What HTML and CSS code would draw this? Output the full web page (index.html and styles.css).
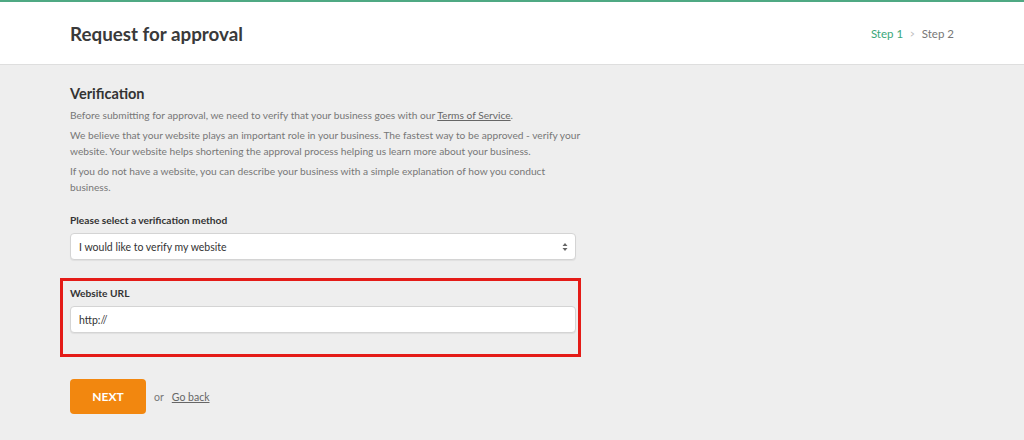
FILE: index.html
```html
<!doctype html>
<html lang="en">
<head>
  <meta charset="UTF-8">
  <meta name="viewport" content="width=device-width, initial-scale=1.0">
  <title>Request for approval</title>
  <link rel="stylesheet" href="styles.css">
</head>
<body>
  <header class="topbar">
    <h1>Request for approval</h1>
    <div class="steps">
      <span class="step active">Step 1</span>
      <span class="step-sep">&gt;</span>
      <span class="step">Step 2</span>
    </div>
  </header>

  <form class="content" method="POST" action="/approval">
    <h2>Verification</h2>
    <p>Before submitting for approval, we need to verify that your business goes with our <a href="#">Terms of Service</a>.</p>
    <p>We believe that your website plays an important role in your business. The fastest way to be approved - verify your website. Your website helps shortening the approval process helping us learn more about your business.</p>
    <p>If you do not have a website, you can describe your business with a simple explanation of how you conduct business.</p>

    <div class="form-group">
      <label for="method">Please select a verification method</label>
      <div class="select-wrapper">
        <select id="method" name="method">
          <option>I would like to verify my website</option>
          <option>I would like to describe my business</option>
        </select>
        <svg class="select-arrows" width="6" height="10" viewBox="0 0 6 10">
          <path d="M0.5 4 L3 1 L5.5 4 Z M0.5 6 L3 9 L5.5 6 Z" fill="#666"/>
        </svg>
      </div>
    </div>

    <div class="form-group highlight">
      <label for="url">Website URL</label>
      <input type="text" id="url" name="url" value="http://">
    </div>

    <div class="actions">
      <button type="submit" class="next-btn">NEXT</button>
      <span class="or">or</span>
      <a href="#" class="back-link">Go back</a>
    </div>
  </form>
</body>
</html>
```

FILE: styles.css
```css
body {
  font-family: Lato, 'Liberation Sans', Arial, sans-serif;
  margin: 0;
  padding: 0;
  background: #eeeeee;
  color: #333;
}

.topbar {
  background: #fff;
  border-top: 2px solid #4fa983;
  border-bottom: 1px solid #dedede;
  height: 62px;
  padding: 0 70px;
  display: flex;
  align-items: center;
  justify-content: space-between;
}

.topbar h1 {
  margin: 0;
  font-size: 18.8px;
  font-weight: bold;
  color: #3a3a3a;
}

.steps {
  font-size: 11.5px;
  color: #777;
  display: flex;
  gap: 6px;
}

.step.active {
  color: #3aa77a;
}

.step-sep {
  color: #bbb;
  transform: scaleX(0.7);
}

.content {
  padding: 20px 70px 0;
  width: 506px;
}

h2 {
  margin: 0 0 5px;
  font-size: 14.5px;
  color: #333;
}

p {
  margin: 0 -8px 4px 0;
  font-size: 10.2px;
  line-height: 16px;
  color: #777;
}

p a {
  color: #666;
}

.form-group {
  margin-top: 19px;
}

label {
  display: block;
  font-size: 10.2px;
  font-weight: bold;
  color: #333;
  margin-bottom: 7px;
}

.select-wrapper {
  position: relative;
}

select,
input[type="text"] {
  display: block;
  width: 100%;
  box-sizing: border-box;
  height: 27px;
  padding: 0 8px;
  background: #fff;
  border: 1px solid #d4d4d4;
  border-radius: 4px;
  box-shadow: 0 1px 1px rgba(0, 0, 0, 0.06);
  font-family: inherit;
  font-size: 10.5px;
  color: #333;
  appearance: none;
  -webkit-appearance: none;
}

.select-arrows {
  position: absolute;
  right: 8px;
  top: 9px;
}

.highlight {
  margin: 18px -5px 0 -10px;
  padding: 6px 2px 21px 7px;
  border: 3px solid #e41b17;
}

.actions {
  display: flex;
  align-items: center;
  margin-top: 22px;
}

.next-btn {
  width: 76px;
  height: 35px;
  background: #f2870f;
  color: #fff;
  border: none;
  border-radius: 4px;
  font-family: inherit;
  font-size: 12px;
  font-weight: bold;
  cursor: pointer;
}

.or {
  font-size: 10.5px;
  color: #777;
  margin: 0 8px 0 8px;
}

.back-link {
  font-size: 10.5px;
  color: #666;
}
```
